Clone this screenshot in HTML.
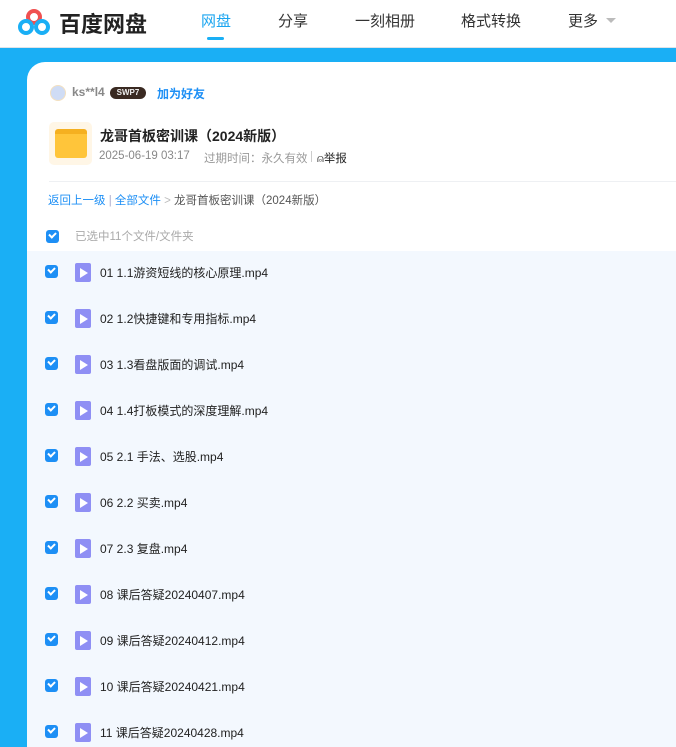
<!DOCTYPE html><html><head><meta charset="utf-8"><style>
*{margin:0;padding:0;box-sizing:border-box}
html{width:676px;height:747px;overflow:hidden}
body{width:676px;height:747px;overflow:hidden;font-family:"Liberation Sans","Noto Sans CJK SC",sans-serif;background:#1aaff5;position:relative}
.hdr{position:absolute;left:0;top:0;width:676px;height:48px;background:#fff;border-bottom:1px solid #dfe3e8}
.logo{position:absolute;left:59px;top:7px;font-size:22px;font-weight:bold;color:#222;letter-spacing:0px}
.nav{position:absolute;top:10px;font-size:15px;color:#333}
.card{position:absolute;left:27px;top:62px;width:660px;height:685px;background:#fff;border-top-left-radius:18px}
.abs{position:absolute}
.list{position:absolute;left:27px;top:251px;width:660px;height:496px;background:#f3f8fe}
.cb{position:absolute;width:13px;height:13px;background:#1d8ff5;border-radius:3px}
.cb:after{content:"";position:absolute;left:3px;top:2px;width:5px;height:3px;border-left:2px solid #fff;border-bottom:2px solid #fff;transform:rotate(-45deg)}
.row{position:absolute;left:0;width:676px;height:46px}
.row .cb{left:45px;top:-8px}
.vid{position:absolute;left:75px;top:-10px;width:16px;height:19px;background:#8f8ff4;border-radius:2px}
.vid:after{content:"";position:absolute;left:5px;top:5px;border-left:8px solid #fff;border-top:5px solid transparent;border-bottom:5px solid transparent}
.row span{position:absolute;left:100px;top:-9px;font-size:12px;color:#222}
</style></head><body>
<div class="hdr">
<svg class="abs" style="left:16px;top:6px" width="40" height="34" viewBox="0 0 40 34"><circle cx="18" cy="11" r="6" fill="none" stroke="#f05050" stroke-width="4"/><circle cx="10" cy="21" r="6" fill="none" stroke="#1aaff5" stroke-width="4"/><circle cx="26" cy="21" r="6" fill="none" stroke="#1aaff5" stroke-width="4"/></svg>
<div class="logo">百度网盘</div>
<div class="nav" style="left:201px;color:#1aa5f0">网盘</div>
<div class="abs" style="left:207px;top:37px;width:17px;height:3px;background:#1aaff5;border-radius:2px"></div>
<div class="nav" style="left:278px">分享</div>
<div class="nav" style="left:355px">一刻相册</div>
<div class="nav" style="left:461px">格式转换</div>
<div class="nav" style="left:568px">更多</div>
<div class="abs" style="left:606px;top:18px;border-top:5px solid #bbb;border-left:5px solid transparent;border-right:5px solid transparent"></div>
</div>
<div class="card"></div>
<div class="abs" style="left:50px;top:85px;width:16px;height:16px;border-radius:50%;background:#cfdcf5;border:1px solid #f3e0c0"></div>
<div class="abs" style="left:72px;top:85px;font-size:12px;color:#888;font-weight:bold">ks**l4</div>
<div class="abs" style="left:110px;top:87px;width:36px;height:12px;border-radius:6px;background:#3a2a22;color:#eee;font-size:8px;text-align:center;line-height:12px;font-weight:bold">SWP7</div>
<div class="abs" style="left:157px;top:85px;font-size:12px;color:#1d8ff5;font-weight:bold">加为好友</div>
<div class="abs" style="left:49px;top:122px;width:43px;height:43px;background:#fff6e6;border-radius:5px"></div>
<div class="abs" style="left:55px;top:129px;width:32px;height:29px;background:#ffc53a;border-radius:3px;border-top:5px solid #f5b020"></div>
<div class="abs" style="left:100px;top:126px;font-size:14px;color:#222;font-weight:bold">龙哥首板密训课（2024新版）</div>
<div class="abs" style="left:99px;top:150px;font-size:11.5px;color:#888">2025-06-19 03:17</div>
<div class="abs" style="left:204px;top:150px;font-size:11.5px;color:#999">过期时间：永久有效</div>
<div class="abs" style="left:311px;top:151px;width:1px;height:11px;background:#ccc"></div>
<div class="abs" style="left:317px;top:150px;font-size:11.5px;color:#222">⍝举报</div>
<div class="abs" style="left:49px;top:181px;width:640px;height:1px;background:#eef0f3"></div>
<div class="abs" style="left:48px;top:192px;font-size:11.5px;color:#1d8ff5">返回上一级 <span style="color:#aac">|</span> 全部文件 <span style="color:#bbb">&gt;</span> <span style="color:#555">龙哥首板密训课（2024新版）</span></div>
<div class="cb" style="left:46px;top:230px"></div>
<div class="abs" style="left:75px;top:228px;font-size:11.5px;color:#aaa">已选中11个文件/文件夹</div>
<div class="list"></div>
<div class="row" style="top:273px"><div class="cb"></div><div class="vid"></div><span>01 1.1游资短线的核心原理.mp4</span></div>
<div class="row" style="top:319px"><div class="cb"></div><div class="vid"></div><span>02 1.2快捷键和专用指标.mp4</span></div>
<div class="row" style="top:365px"><div class="cb"></div><div class="vid"></div><span>03 1.3看盘版面的调试.mp4</span></div>
<div class="row" style="top:411px"><div class="cb"></div><div class="vid"></div><span>04 1.4打板模式的深度理解.mp4</span></div>
<div class="row" style="top:457px"><div class="cb"></div><div class="vid"></div><span>05 2.1 手法、选股.mp4</span></div>
<div class="row" style="top:503px"><div class="cb"></div><div class="vid"></div><span>06 2.2 买卖.mp4</span></div>
<div class="row" style="top:549px"><div class="cb"></div><div class="vid"></div><span>07 2.3 复盘.mp4</span></div>
<div class="row" style="top:595px"><div class="cb"></div><div class="vid"></div><span>08 课后答疑20240407.mp4</span></div>
<div class="row" style="top:641px"><div class="cb"></div><div class="vid"></div><span>09 课后答疑20240412.mp4</span></div>
<div class="row" style="top:687px"><div class="cb"></div><div class="vid"></div><span>10 课后答疑20240421.mp4</span></div>
<div class="row" style="top:733px"><div class="cb"></div><div class="vid"></div><span>11 课后答疑20240428.mp4</span></div>
</body></html>
